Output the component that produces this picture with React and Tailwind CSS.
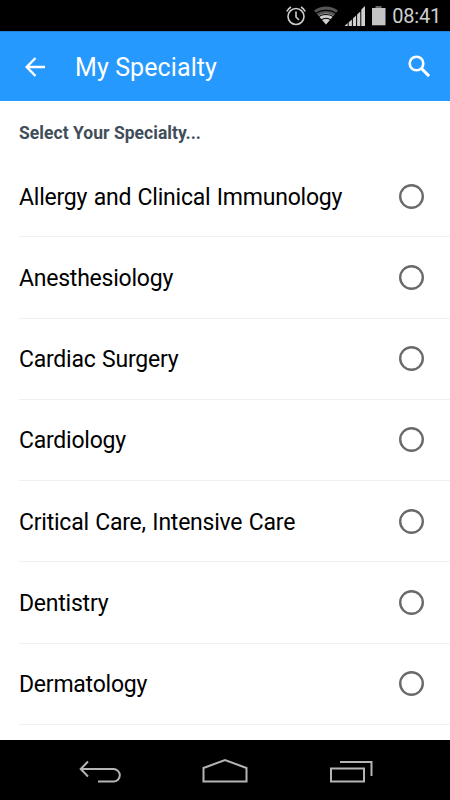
import React, { useState } from "react";

const specialties = [
  "Allergy and Clinical Immunology",
  "Anesthesiology",
  "Cardiac Surgery",
  "Cardiology",
  "Critical Care, Intensive Care",
  "Dentistry",
  "Dermatology",
];

const StatusBar = () => (
  <div className="flex h-[31px] shrink-0 items-center justify-end bg-black pr-[9px] text-[#cfcfcf]">
    <svg width="102" height="24" viewBox="0 0 102 24" fill="none">
      {/* alarm */}
      <g stroke="currentColor" strokeWidth="1.6">
        <circle cx="12" cy="12.5" r="8" />
        <path d="M12 7.500v5.500l3 3" />
        <path d="M2.800 7.500a10 10 0 0 1 4.200-4.500M17 3a10 10 0 0 1 4.200 4.500" />
      </g>
      {/* wifi */}
      <path d="M30 6.500c7-5.300 17-5.300 24 0L42 20.500z" fill="#555" />
      <path d="M34.500 11.700c4.500-3 10.500-3 15 0L42 20.500z" fill="currentColor" />
      <path
        d="M31.500 9.700c6-4.400 15-4.400 21 0M34.200 12.900c4.600-3.200 11-3.200 15.600 0M37 15.900c3-2 7-2 10 0"
        stroke="#000"
        strokeWidth="1.1"
      />
      {/* signal */}
      <path
        d="M60.500 22l3.200-2.900V22zM64.700 22v-3.700l3.200-2.900V22zM68.900 22v-7.600l3.200-3V22zM73.100 22V10.400l3.200-3V22zM77.300 22V5.400l3.700-3.400V22z"
        fill="currentColor"
      />
      {/* battery */}
      <path d="M91.500 2h6v2h-6z" fill="#666" />
      <path d="M88 4h13.500v17.300H88z" fill="#c4c4c4" />
    </svg>
    <span className="ml-[6px] pt-px text-[20px] leading-[31px] tracking-[-0.2px]">
      08:41
    </span>
  </div>
);

const Header = () => (
  <div className="flex h-[70px] shrink-0 items-center border-t border-[#2382d8] bg-[#2699fe] pl-[25px] pr-[19px] text-white">
    <svg width="21" height="20" viewBox="0 0 21 20" fill="none" stroke="currentColor" strokeWidth="2.4">
      <path d="M10.500 1L1.700 10l8.800 9M2 10h18" />
    </svg>
    <h1 className="ml-[29px] flex-1 pt-[3px] text-[25px] leading-8 tracking-[0.1px]">
      My Specialty
    </h1>
    <svg width="23" height="23" viewBox="0 0 23 23" fill="none" stroke="currentColor">
      <circle cx="8.500" cy="8.500" r="6.800" strokeWidth="2.600" />
      <path d="M13.500 13.500l7.600 7.600" strokeWidth="3" />
    </svg>
  </div>
);

const SpecialtyRow = ({ name, checked, onSelect }) => (
  <li
    onClick={() => onSelect(name)}
    className="flex h-[81.25px] items-center justify-between border-b border-[#f0f0f0] pr-[26px]"
  >
    <span className="whitespace-nowrap pt-[3px] text-[23px] leading-8 tracking-[-0.23px] [word-spacing:1px] text-black">
      {name}
    </span>
    <svg width="25" height="25" viewBox="0 0 25 25" fill="none">
      <circle cx="12.500" cy="12.500" r="11.300" stroke="#6a6a6a" strokeWidth="2.400" />
      {checked && <circle cx="12.500" cy="12.500" r="6" fill="#2699fe" />}
    </svg>
  </li>
);

const NavBar = () => (
  <div className="flex h-[60px] shrink-0 items-center bg-black pl-[79px] text-[#b5b5b5]">
    <svg className="mt-[4px]" width="43" height="24" viewBox="0 0 43 24" fill="none" stroke="currentColor" strokeWidth="2">
      <path d="M9 1.500L1.700 9 9 16.500M2 9h32.500a6.300 6.300 0 0 1 0 12.600H19" />
    </svg>
    <svg className="ml-[80px]" width="46" height="25" viewBox="0 0 46 25" fill="none" stroke="currentColor" strokeWidth="2">
      <path d="M1.500 23.500V10L23 2l21.500 8v13.500z" />
    </svg>
    <svg className="ml-[82px] mt-[3px]" width="43" height="23" viewBox="0 0 43 23" fill="none" stroke="currentColor" strokeWidth="2">
      <path d="M1 8.500h33v13H1zM10 2h31.500v14" />
    </svg>
  </div>
);

const App = () => {
  const [selected, setSelected] = useState(null);

  return (
    <div className="flex h-[800px] w-[450px] flex-col overflow-hidden bg-white font-[Roboto,sans-serif]">
      <StatusBar />
      <Header />
      <div className="min-h-0 flex-1 overflow-hidden pl-[19px]">
        <h2 className="h-[55px] pt-[20px] text-[17.500px] font-bold leading-6 tracking-[0.04px] text-[#414e59]">
          Select Your Specialty...
        </h2>
        <ul>
          {specialties.map((name) => (
            <SpecialtyRow
              key={name}
              name={name}
              checked={selected === name}
              onSelect={setSelected}
            />
          ))}
        </ul>
      </div>
      <NavBar />
    </div>
  );
};

export default App;
